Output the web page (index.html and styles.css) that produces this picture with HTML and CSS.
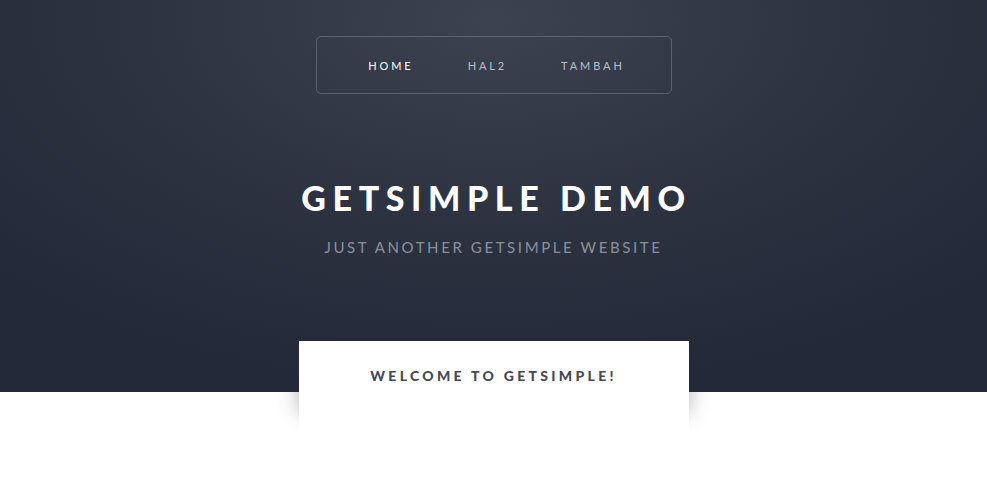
FILE: index.html
```html
<!DOCTYPE html>
<html>
<head>
<meta charset="utf-8">
<link rel="stylesheet" href="styles.css">
</head>
<body>
<header class="hero">
  <nav class="nav">
    <a class="nav-link active" href="#">HOME</a>
    <a class="nav-link" href="#">HAL2</a>
    <a class="nav-link" href="#">TAMBAH</a>
  </nav>
  <h1 class="site-title">GETSIMPLE DEMO</h1>
  <p class="tagline">JUST ANOTHER GETSIMPLE WEBSITE</p>
</header>
<main class="content">
  <article class="card">
    <h2 class="card-title">WELCOME TO GETSIMPLE!</h2>
  </article>
</main>
</body>
</html>
```
FILE: styles.css
```css
html {
  background: #fff;
}
body {
  margin: 0;
  padding: 0;
  font-family: Lato, "Open Sans", sans-serif;
  overflow: hidden;
}
.hero {
  height: 392px;
  background: radial-gradient(ellipse 70% 95% at 50% 5%, #3c424f 0%, #2c3240 55%, #232938 100%);
  display: flex;
  flex-direction: column;
  align-items: center;
  padding-top: 36px;
  box-sizing: border-box;
}
.nav {
  width: 356px;
  height: 58px;
  box-sizing: border-box;
  border: 1px solid rgba(255,255,255,0.2);
  border-radius: 5px;
  display: flex;
  align-items: center;
  justify-content: center;
  gap: 54px;
  padding-left: 6px;
}
.nav-link {
  color: #b9c0cc;
  text-decoration: none;
  font-size: 11px;
  letter-spacing: 2.9px;
}
.nav-link.active {
  color: #ffffff;
  font-weight: 400;
}
.site-title {
  margin: 84px 0 0 0;
  color: #fff;
  font-size: 34px;
  font-weight: 900;
  letter-spacing: 6.6px;
  line-height: 40px;
  padding-left: 6px;
}
.tagline {
  margin: 19px 0 0 0;
  color: #8b919c;
  font-size: 15px;
  letter-spacing: 2.6px;
  line-height: 20px;
}
.content {
  display: flex;
  justify-content: center;
  margin-top: -51px;
}
.card {
  position: relative;
  width: 390px;
  height: 160px;
  background: #fff;
  text-align: center;
}
.card::before {
  content: "";
  position: absolute;
  z-index: -1;
  left: 0;
  right: 0;
  top: 0;
  height: 66px;
  background: #fff;
  box-shadow: 0 6px 20px rgba(0,0,0,0.3);
}
.card-title {
  margin: 26px 0 0 0;
  font-size: 14px;
  font-weight: 900;
  letter-spacing: 3.3px;
  color: #464953;
}
```
